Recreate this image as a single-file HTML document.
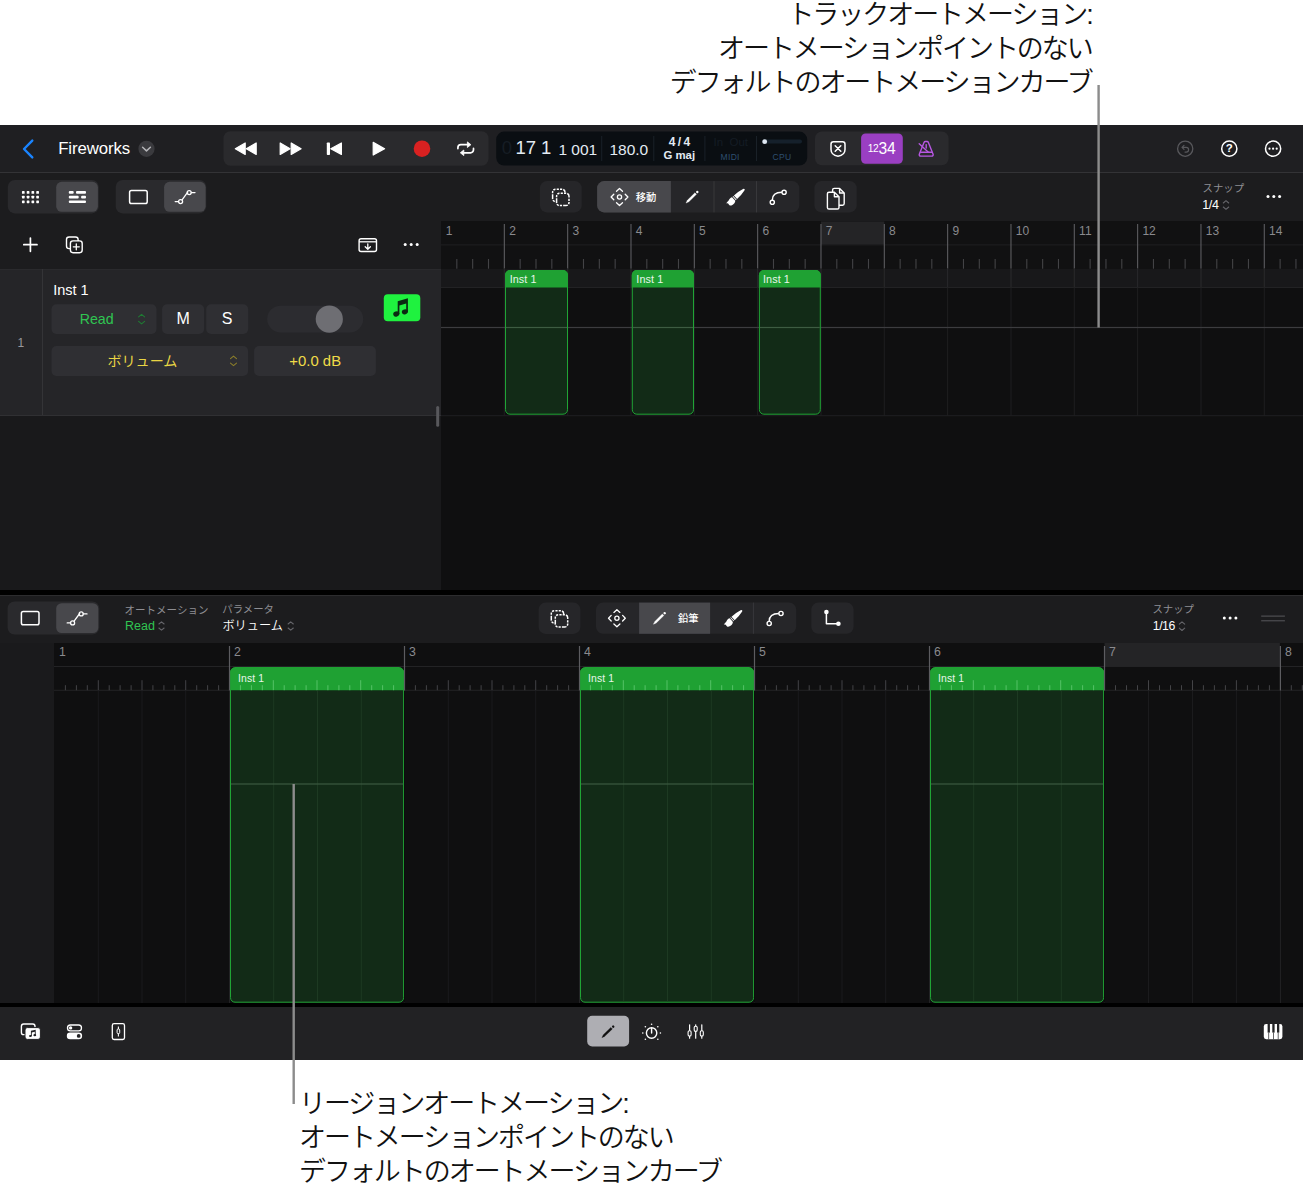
<!DOCTYPE html>
<html lang="ja"><head><meta charset="utf-8"><title>Logic Pro</title><style>
*{box-sizing:border-box;margin:0;padding:0}
html,body{width:1303px;height:1192px;overflow:hidden;background:#fff}
body{position:relative;font-family:"Liberation Sans","Noto Sans CJK JP",sans-serif;color:#fff}
.abs{position:absolute}
.cap{position:absolute;color:#111;font-weight:350;font-size:27px;line-height:34px;white-space:nowrap;letter-spacing:-2.05px}
.box{position:absolute}
.t{position:absolute;white-space:nowrap;line-height:1}
.grp{position:absolute;background:#2a2a2d;border-radius:7px}
.sel{position:absolute;background:#48484c;border-radius:5px}
.btn{position:absolute;background:#2e2e32;border-radius:5px}
svg{position:absolute;left:0;top:0;overflow:visible}
</style></head><body>
<div class="cap" style="right:211.300px;top:-1.800px;text-align:right">トラックオートメーション:<br>オートメーションポイントのない<br>デフォルトのオートメーションカーブ</div>
<div class="cap" style="left:299px;top:1086.800px">リージョンオートメーション:<br>オートメーションポイントのない<br>デフォルトのオートメーションカーブ</div>
<div class="box" style="left:0px;top:125px;width:1303px;height:935px;background:#1c1c1e;"></div>
<div class="box" style="left:0px;top:125px;width:1303px;height:48px;background:#1f1f22;border-bottom:1px solid #333336"></div>
<div class="box" style="left:0px;top:173px;width:1303px;height:48.5px;background:#1c1c1e;border-bottom:1px solid #28282a"></div>
<div class="box" style="left:0px;top:221px;width:441px;height:48px;background:#1c1c1e;"></div>
<div class="box" style="left:441px;top:221px;width:862px;height:48px;background:#111112;"></div>
<div class="box" style="left:0px;top:268.5px;width:441px;height:147px;background:#252528;border-top:1px solid #2a2a2d;border-bottom:1px solid #303033"></div>
<div class="box" style="left:42px;top:269px;width:1px;height:146px;background:#343437;"></div>
<div class="box" style="left:0px;top:416px;width:441px;height:174px;background:#19191b;"></div>
<div class="box" style="left:441px;top:268.5px;width:862px;height:322px;background:#0f0f10;"></div>
<div class="box" style="left:441px;top:268.5px;width:862px;height:19px;background:#18181a;border-bottom:1px solid #222224"></div>
<div class="box" style="left:0px;top:590px;width:1303px;height:4.5px;background:#000;"></div>
<div class="box" style="left:0px;top:594.5px;width:1303px;height:48.5px;background:#1c1c1e;border-top:1px solid #2c2c2e"></div>
<div class="box" style="left:0px;top:643px;width:54px;height:360px;background:#1a1a1c;"></div>
<div class="box" style="left:54px;top:643px;width:1249px;height:360px;background:#0f0f10;"></div>
<div class="box" style="left:0px;top:1003px;width:1303px;height:4px;background:#000;"></div>
<div class="box" style="left:0px;top:1007px;width:1303px;height:52.6px;background:#222224;"></div>
<svg width="1303" height="1192" viewBox="0 0 1303 1192"><polyline points="32.3,140.6 24,149 32.3,157.4" fill="none" stroke="#1a84ff" stroke-width="2.4" stroke-linecap="round" stroke-linejoin="round"/><circle cx="146.5" cy="148.8" r="8.1" fill="#3a3a3e"/><polyline points="142.6,147.3 146.5,150.9 150.4,147.3" fill="none" stroke="#b4b4b8" stroke-width="1.5" stroke-linecap="round" stroke-linejoin="round"/><rect x="223.5" y="131.3" width="265" height="34.4" rx="7" fill="#2a2a2d"/><polygon points="235.3,148.7 245.2,143 245.2,154.4" fill="#fff" stroke="#fff" stroke-width="1.2" stroke-linejoin="round"/><polygon points="246.3,148.7 256.2,143 256.2,154.4" fill="#fff" stroke="#fff" stroke-width="1.2" stroke-linejoin="round"/><polygon points="301.1,148.7 291.2,143 291.2,154.4" fill="#fff" stroke="#fff" stroke-width="1.2" stroke-linejoin="round"/><polygon points="290.1,148.7 280.2,143 280.2,154.4" fill="#fff" stroke="#fff" stroke-width="1.2" stroke-linejoin="round"/><rect x="326.8" y="142.4" width="3.2" height="12.6" rx="0.8" fill="#fff"/><polygon points="330.8,148.7 341.4,143 341.4,154.4" fill="#fff" stroke="#fff" stroke-width="1.2" stroke-linejoin="round"/><polygon points="373.2,142.4 384.6,148.7 373.2,155" fill="#fff" stroke="#fff" stroke-width="1.2" stroke-linejoin="round"/><circle cx="422" cy="148.7" r="8.3" fill="#d92121"/><g fill="none" stroke="#fff" stroke-width="1.700" stroke-linecap="round" stroke-linejoin="round"><path d="M457.900 148.600v-.900a3 3 0 0 1 3-3h6.400"/><path d="M473.500 148.400v1.400a3 3 0 0 1-3 3h-6.400"/></g><g fill="#fff" stroke="#fff" stroke-width=".800" stroke-linejoin="round"><polygon points="467.400,141.900 470.900,144.700 467.400,147.500"/><polygon points="463.800,150 460.300,152.800 463.800,155.600"/></g><rect x="496.2" y="131.6" width="311" height="34" rx="8" fill="#0a0e12"/><rect x="601.2" y="136" width="1" height="25" fill="#1a2128"/><rect x="653.3" y="136" width="1" height="25" fill="#1a2128"/><rect x="704.4" y="136" width="1" height="25" fill="#1a2128"/><rect x="756.0" y="136" width="1" height="25" fill="#1a2128"/><rect x="762" y="139.6" width="40" height="4" rx="2" fill="#15202b"/><circle cx="764.7" cy="141.7" r="2.4" fill="#dfe8f2"/><rect x="815" y="131.4" width="133.6" height="33.9" rx="7" fill="#2a2a2d"/><rect x="861.1" y="133.4" width="41.7" height="30.3" rx="4.5" fill="#9a3fc2"/><path d="M833.4 141.8h9.200a2.400 2.400 0 0 1 2.400 2.400v5.200c0 3.800-2.800 6-7 6.800c-4.200-.800-7-3-7-6.800v-5.200a2.400 2.400 0 0 1 2.400-2.400z" fill="none" stroke="#fff" stroke-width="1.500" stroke-linejoin="round"/><path d="M835.200 145.700l5.600 5.600m0-5.600l-5.600 5.600" stroke="#fff" stroke-width="1.500" stroke-linecap="round"/><g fill="none" stroke="#b757e2" stroke-width="1.400" stroke-linecap="round" stroke-linejoin="round"><path d="M925.300 141.500h1.800a1.400 1.400 0 0 1 1.300 .900l4.700 11.800a1.400 1.400 0 0 1-1.300 1.900h-11.200a1.400 1.400 0 0 1-1.300-1.900l4.700-11.800a1.400 1.400 0 0 1 1.300-.900z"/><path d="M920.400 152.300h11.600"/><path d="M919.200 143.800l9.200 8.400"/><path d="M926.200 144.600v3.400"/></g><circle cx="1185.2" cy="148.7" r="7.6" fill="none" stroke="#58585c" stroke-width="1.3"/><path d="M1182.2 147.3h4a2.400 2.400 0 0 1 0 4.800h-1.200M1184 145.300l-2 2 2 2" fill="none" stroke="#58585c" stroke-width="1.200" stroke-linecap="round" stroke-linejoin="round"/><circle cx="1229.3" cy="148.7" r="7.6" fill="none" stroke="#fff" stroke-width="1.5"/><circle cx="1273.1" cy="148.7" r="7.6" fill="none" stroke="#fff" stroke-width="1.5"/><circle cx="1269.5" cy="148.7" r="1.100" fill="#fff"/><circle cx="1273.1" cy="148.7" r="1.100" fill="#fff"/><circle cx="1276.6999999999998" cy="148.7" r="1.100" fill="#fff"/><rect x="7.8" y="180" width="91" height="33.400" rx="7" fill="#2a2a2d"/><rect x="56.2" y="181.800" width="41.700" height="30" rx="5.500" fill="#48484c"/><rect x="115.7" y="180" width="90.600" height="33.400" rx="7" fill="#2a2a2d"/><rect x="164.1" y="181.800" width="41.500" height="30" rx="5.500" fill="#48484c"/><rect x="21.95" y="191.05" width="2.700" height="2.700" rx=".600" fill="#fff"/><rect x="26.72" y="191.05" width="2.700" height="2.700" rx=".600" fill="#fff"/><rect x="31.49" y="191.05" width="2.700" height="2.700" rx=".600" fill="#fff"/><rect x="36.26" y="191.05" width="2.700" height="2.700" rx=".600" fill="#fff"/><rect x="21.95" y="195.75" width="2.700" height="2.700" rx=".600" fill="#fff"/><rect x="26.72" y="195.75" width="2.700" height="2.700" rx=".600" fill="#fff"/><rect x="31.49" y="195.75" width="2.700" height="2.700" rx=".600" fill="#fff"/><rect x="36.26" y="195.75" width="2.700" height="2.700" rx=".600" fill="#fff"/><rect x="21.95" y="200.45" width="2.700" height="2.700" rx=".600" fill="#fff"/><rect x="26.72" y="200.45" width="2.700" height="2.700" rx=".600" fill="#fff"/><rect x="31.49" y="200.45" width="2.700" height="2.700" rx=".600" fill="#fff"/><rect x="36.26" y="200.45" width="2.700" height="2.700" rx=".600" fill="#fff"/><rect x="68.8" y="191.10" width="4.9" height="2.600" rx="1" fill="#fff"/><rect x="76" y="191.10" width="10" height="2.600" rx="1" fill="#fff"/><rect x="68.8" y="195.80" width="9.9" height="2.600" rx="1" fill="#fff"/><rect x="81.1" y="195.80" width="4.9" height="2.600" rx="1" fill="#fff"/><rect x="68.8" y="200.50" width="17.2" height="2.600" rx="1" fill="#fff"/><rect x="129.6" y="190.400" width="17.600" height="13.200" rx="1.800" fill="none" stroke="#fff" stroke-width="1.500"/><g fill="none" stroke="#fff" stroke-width="1.300" stroke-linecap="round"><path d="M175.2 201.6h3M182.1 199.79999999999998l5.600-7.600M191.39999999999998 192.6h3.600"/><circle cx="180.6" cy="201.6" r="2"/><circle cx="189.2" cy="192.6" r="2"/></g><rect x="539.9" y="181.1" width="41.800" height="31.300" rx="7" fill="#262629"/><rect x="552.6" y="189.2" width="12.400" height="12.400" rx="3" fill="none" stroke="#fff" stroke-width="1.500" stroke-dasharray="2.200 1.100 2.200 1.100 4.710 1.100" stroke-dashoffset="11.310"/><rect x="555.8000000000001" y="192.39999999999998" width="14" height="14" rx="3.600" fill="#262629"/><rect x="556.6" y="193.2" width="12.400" height="12.400" rx="3" fill="none" stroke="#fff" stroke-width="1.500" stroke-dasharray="2.200 1.100 2.200 1.100 4.710 1.100" stroke-dashoffset="11.310"/><rect x="597.1" y="181.100" width="202.200" height="31.300" rx="7" fill="#262629"/><path d="M604.1 181.100h66.800v31.300h-66.800a7 7 0 0 1-7-7v-17.300a7 7 0 0 1 7-7z" fill="#48484c"/><rect x="713.5" y="181.100" width="1" height="31.300" fill="#38383b"/><rect x="756" y="181.100" width="1" height="31.300" fill="#38383b"/><g fill="none" stroke="#fff" stroke-width="1.300" stroke-linecap="round" stroke-linejoin="round"><circle cx="619.5" cy="197" r="2.100"/><polyline points="616.5,191.2 619.5,188.5 622.5,191.2"/><polyline points="616.5,202.8 619.5,205.5 622.5,202.8"/><polyline points="613.8,194.2 611.1,197 613.8,199.8"/><polyline points="625.2,194.2 627.9,197 625.2,199.8"/></g><g transform="translate(686.0 203.1) rotate(-44.500)" fill="#fff"><path d="M0 0L3-1.050L13.600-1.100L13.600 1.100L3 1.050Z" stroke="#fff" stroke-width="0.300" stroke-linejoin="round"/><rect x="14.700" y="-1.250" width="2.300" height="2.500" rx="1.100"/></g><g transform="translate(729.0 203) rotate(-42)" fill="#fff"><path d="M8.700-2.300Q14-2.500 19.800-1A1 1 0 0 1 19.800 1Q14 2.600 8.700 2.400Z"/><rect x="7" y="-2.400" width=".900" height="4.900"/><path d="M6.200-2.300L6.200 2.500C5.200 3.600 3 4.200 .800 3.600C-1 3.100-1.600 1.600-1 .400C-.700-.300-1.200-1-2.400-1.500C-.800-2.300 .800-1.600 2.200-2.400C3.500-3.100 5-2.900 6.200-2.300Z"/></g><g fill="none" stroke="#fff" stroke-width="1.400"><path d="M772.3 200.10000000000002c0-5.100 3.700-7.800 9.600-7.800"/><circle cx="772.3" cy="202.3" r="2.100"/><circle cx="784.1" cy="192.3" r="2.100"/></g><rect x="814.4" y="181.100" width="42.300" height="31.300" rx="7" fill="#262629"/><g fill="#262629" stroke="#fff" stroke-width="1.400" stroke-linejoin="round"><path d="M834.200 188.400h5.400l4.600 4.600v10.600a1.600 1.600 0 0 1-1.600 1.600h-8.400a1.600 1.600 0 0 1-1.600-1.600v-13.600a1.600 1.600 0 0 1 1.600-1.600z"/><path d="M839.600 188.600v4.400h4.400" fill="none"/><path d="M829 192.200h5.400l4.600 4.600v10.600a1.600 1.600 0 0 1-1.600 1.600h-8.400a1.600 1.600 0 0 1-1.600-1.600v-13.600a1.600 1.600 0 0 1 1.600-1.600z"/><path d="M834.400 192.400v4.400h4.400" fill="none"/></g><g fill="none" stroke="#66666b" stroke-width="1.100" stroke-linecap="round" stroke-linejoin="round"><polyline points="1223.3,203 1226,200.7 1228.7,203"/><polyline points="1223.3,207 1226,209.3 1228.7,207"/></g><circle cx="1268.0" cy="196.600" r="1.500" fill="#fff"/><circle cx="1273.8" cy="196.600" r="1.500" fill="#fff"/><circle cx="1279.6" cy="196.600" r="1.500" fill="#fff"/></svg>
<div class="t" style="left:58.2px;top:140.68px;font-size:16.8px;color:#fff;font-weight:400;letter-spacing:-0.1px">Fireworks</div>
<div class="t" style="left:501.8px;top:139.34px;font-size:18.5px;color:#161d24;font-weight:400;">0</div>
<div class="t" style="left:515.4px;top:139.34px;font-size:18.5px;color:#e3ebf3;font-weight:400;">17 1</div>
<div class="t" style="left:558.4px;top:141.88px;font-size:15.5px;color:#e3ebf3;font-weight:400;">1 001</div>
<div class="t" style="left:609.4px;top:141.88px;font-size:15.5px;color:#e3ebf3;font-weight:400;">180.0</div>
<div class="t" style="left:479.29999999999995px;width:400px;text-align:center;top:136.2px;font-size:12px;color:#e3ebf3;font-weight:700;letter-spacing:-0.5px">4 / 4</div>
<div class="t" style="left:479.29999999999995px;width:400px;text-align:center;top:150.4px;font-size:11.4px;color:#e3ebf3;font-weight:700;">G maj</div>
<div class="t" style="left:530.8px;width:400px;text-align:center;top:137.2px;font-size:11.5px;color:#141c24;font-weight:400;">In &nbsp;Out</div>
<div class="t" style="left:530.2px;width:400px;text-align:center;top:152.8px;font-size:8.5px;color:#2e4f70;font-weight:400;letter-spacing:0.3px">MIDI</div>
<div class="t" style="left:582px;width:400px;text-align:center;top:152.8px;font-size:8.5px;color:#2e4f70;font-weight:400;letter-spacing:0.3px">CPU</div>
<div class="t" style="left:867.8px;top:144.37px;font-size:10.2px;color:#fff;font-weight:400;letter-spacing:-0.5px">12</div>
<div class="t" style="left:878.6px;top:140.99px;font-size:15.6px;color:#fff;font-weight:400;letter-spacing:-0.2px">34</div>
<div class="t" style="left:1029.3px;width:400px;text-align:center;top:143.3px;font-size:11.5px;color:#fff;font-weight:700;">?</div>
<div class="t" style="left:635.8px;top:192.7px;font-size:10.3px;color:#fff;font-weight:500;">移動</div>
<div class="t" style="left:1202.6px;top:184.4px;font-size:10.4px;color:#8e8e93;font-weight:400;">スナップ</div>
<div class="t" style="left:1202.2px;top:199.4px;font-size:12.5px;color:#fff;font-weight:400;letter-spacing:-0.3px">1/4</div>
<svg width="1303" height="1192" viewBox="0 0 1303 1192"><path d="M23.800 244.700h13.200M30.400 238.100v13.200" stroke="#fff" stroke-width="1.700" stroke-linecap="round"/><rect x="66.500" y="237" width="11.600" height="11.600" rx="2.600" fill="none" stroke="#fff" stroke-width="1.400"/><rect x="70.400" y="240.900" width="11.800" height="11.800" rx="2.600" fill="#1c1c1e" stroke="#fff" stroke-width="1.400"/><path d="M73.300 246.800h6M76.300 243.800v6" stroke="#fff" stroke-width="1.300" stroke-linecap="round"/><rect x="359.100" y="238.700" width="17.400" height="12.800" rx="2" fill="none" stroke="#fff" stroke-width="1.400"/><path d="M359.100 241.800h17.400" stroke="#fff" stroke-width="1.300"/><path d="M367.800 243.800v5.200M365.200 246.700l2.600 2.500 2.600-2.500" fill="none" stroke="#fff" stroke-width="1.300" stroke-linecap="round" stroke-linejoin="round"/><circle cx="405.2" cy="244.600" r="1.500" fill="#fff"/><circle cx="411.2" cy="244.600" r="1.500" fill="#fff"/><circle cx="417.2" cy="244.600" r="1.500" fill="#fff"/><rect x="821.0" y="221.500" width="63.3" height="23" fill="#242426"/><rect x="441" y="244.400" width="862" height="1" fill="#202022"/><rect x="456.28" y="259" width="1.100" height="9.700" fill="#434346"/><rect x="472.12" y="259" width="1.100" height="9.700" fill="#434346"/><rect x="487.95" y="259" width="1.100" height="9.700" fill="#434346"/><rect x="503.78" y="224" width="1.100" height="44.800" fill="#5c5c60"/><rect x="519.61" y="259" width="1.100" height="9.700" fill="#434346"/><rect x="535.45" y="259" width="1.100" height="9.700" fill="#434346"/><rect x="551.28" y="259" width="1.100" height="9.700" fill="#434346"/><rect x="567.11" y="224" width="1.100" height="44.800" fill="#5c5c60"/><rect x="582.94" y="259" width="1.100" height="9.700" fill="#434346"/><rect x="598.77" y="259" width="1.100" height="9.700" fill="#434346"/><rect x="614.61" y="259" width="1.100" height="9.700" fill="#434346"/><rect x="630.44" y="224" width="1.100" height="44.800" fill="#5c5c60"/><rect x="646.27" y="259" width="1.100" height="9.700" fill="#434346"/><rect x="662.11" y="259" width="1.100" height="9.700" fill="#434346"/><rect x="677.94" y="259" width="1.100" height="9.700" fill="#434346"/><rect x="693.77" y="224" width="1.100" height="44.800" fill="#5c5c60"/><rect x="709.60" y="259" width="1.100" height="9.700" fill="#434346"/><rect x="725.43" y="259" width="1.100" height="9.700" fill="#434346"/><rect x="741.27" y="259" width="1.100" height="9.700" fill="#434346"/><rect x="757.10" y="224" width="1.100" height="44.800" fill="#5c5c60"/><rect x="772.93" y="259" width="1.100" height="9.700" fill="#434346"/><rect x="788.76" y="259" width="1.100" height="9.700" fill="#434346"/><rect x="804.60" y="259" width="1.100" height="9.700" fill="#434346"/><rect x="820.43" y="224" width="1.100" height="44.800" fill="#5c5c60"/><rect x="836.26" y="259" width="1.100" height="9.700" fill="#434346"/><rect x="852.10" y="259" width="1.100" height="9.700" fill="#434346"/><rect x="867.93" y="259" width="1.100" height="9.700" fill="#434346"/><rect x="883.76" y="224" width="1.100" height="44.800" fill="#5c5c60"/><rect x="899.59" y="259" width="1.100" height="9.700" fill="#434346"/><rect x="915.42" y="259" width="1.100" height="9.700" fill="#434346"/><rect x="931.26" y="259" width="1.100" height="9.700" fill="#434346"/><rect x="947.09" y="224" width="1.100" height="44.800" fill="#5c5c60"/><rect x="962.92" y="259" width="1.100" height="9.700" fill="#434346"/><rect x="978.75" y="259" width="1.100" height="9.700" fill="#434346"/><rect x="994.59" y="259" width="1.100" height="9.700" fill="#434346"/><rect x="1010.42" y="224" width="1.100" height="44.800" fill="#5c5c60"/><rect x="1026.25" y="259" width="1.100" height="9.700" fill="#434346"/><rect x="1042.09" y="259" width="1.100" height="9.700" fill="#434346"/><rect x="1057.92" y="259" width="1.100" height="9.700" fill="#434346"/><rect x="1073.75" y="224" width="1.100" height="44.800" fill="#5c5c60"/><rect x="1089.58" y="259" width="1.100" height="9.700" fill="#434346"/><rect x="1105.41" y="259" width="1.100" height="9.700" fill="#434346"/><rect x="1121.25" y="259" width="1.100" height="9.700" fill="#434346"/><rect x="1137.08" y="224" width="1.100" height="44.800" fill="#5c5c60"/><rect x="1152.91" y="259" width="1.100" height="9.700" fill="#434346"/><rect x="1168.75" y="259" width="1.100" height="9.700" fill="#434346"/><rect x="1184.58" y="259" width="1.100" height="9.700" fill="#434346"/><rect x="1200.41" y="224" width="1.100" height="44.800" fill="#5c5c60"/><rect x="1216.24" y="259" width="1.100" height="9.700" fill="#434346"/><rect x="1232.08" y="259" width="1.100" height="9.700" fill="#434346"/><rect x="1247.91" y="259" width="1.100" height="9.700" fill="#434346"/><rect x="1263.74" y="224" width="1.100" height="44.800" fill="#5c5c60"/><rect x="1279.57" y="259" width="1.100" height="9.700" fill="#434346"/><rect x="1295.40" y="259" width="1.100" height="9.700" fill="#434346"/><rect x="503.8" y="268.500" width="1" height="147" fill="#1e1e20"/><rect x="503.8" y="268.500" width="1" height="19" fill="#29292b"/><rect x="567.2" y="268.500" width="1" height="147" fill="#1e1e20"/><rect x="567.2" y="268.500" width="1" height="19" fill="#29292b"/><rect x="630.5" y="268.500" width="1" height="147" fill="#1e1e20"/><rect x="630.5" y="268.500" width="1" height="19" fill="#29292b"/><rect x="693.8" y="268.500" width="1" height="147" fill="#1e1e20"/><rect x="693.8" y="268.500" width="1" height="19" fill="#29292b"/><rect x="757.1" y="268.500" width="1" height="147" fill="#1e1e20"/><rect x="757.1" y="268.500" width="1" height="19" fill="#29292b"/><rect x="820.5" y="268.500" width="1" height="147" fill="#1e1e20"/><rect x="820.5" y="268.500" width="1" height="19" fill="#29292b"/><rect x="883.8" y="268.500" width="1" height="147" fill="#1e1e20"/><rect x="883.8" y="268.500" width="1" height="19" fill="#29292b"/><rect x="947.1" y="268.500" width="1" height="147" fill="#1e1e20"/><rect x="947.1" y="268.500" width="1" height="19" fill="#29292b"/><rect x="1010.5" y="268.500" width="1" height="147" fill="#1e1e20"/><rect x="1010.5" y="268.500" width="1" height="19" fill="#29292b"/><rect x="1073.8" y="268.500" width="1" height="147" fill="#1e1e20"/><rect x="1073.8" y="268.500" width="1" height="19" fill="#29292b"/><rect x="1137.1" y="268.500" width="1" height="147" fill="#1e1e20"/><rect x="1137.1" y="268.500" width="1" height="19" fill="#29292b"/><rect x="1200.5" y="268.500" width="1" height="147" fill="#1e1e20"/><rect x="1200.5" y="268.500" width="1" height="19" fill="#29292b"/><rect x="1263.8" y="268.500" width="1" height="147" fill="#1e1e20"/><rect x="1263.8" y="268.500" width="1" height="19" fill="#29292b"/><rect x="441" y="415.200" width="862" height="1" fill="#202022"/><rect x="441" y="326.900" width="862" height="1.200" fill="#3c3c3f"/><rect x="505.5" y="270.5" width="62.0" height="143.7" rx="4.500" fill="#122b17" stroke="#20a435" stroke-width="1"/><path d="M505.0 287.5v-12.5a5 5 0 0 1 5-5h53.0a5 5 0 0 1 5 5v12.5z" fill="#1fa133"/><rect x="506.0" y="326.900" width="61.0" height="1.200" fill="#3d5c42"/><rect x="632.3" y="270.5" width="61.2" height="143.7" rx="4.500" fill="#122b17" stroke="#20a435" stroke-width="1"/><path d="M631.8 287.5v-12.5a5 5 0 0 1 5-5h52.2a5 5 0 0 1 5 5v12.5z" fill="#1fa133"/><rect x="632.8" y="326.900" width="60.2" height="1.200" fill="#3d5c42"/><rect x="759.4" y="270.5" width="60.9" height="143.7" rx="4.500" fill="#122b17" stroke="#20a435" stroke-width="1"/><path d="M758.9 287.5v-12.5a5 5 0 0 1 5-5h51.9a5 5 0 0 1 5 5v12.5z" fill="#1fa133"/><rect x="759.9" y="326.900" width="59.9" height="1.200" fill="#3d5c42"/><rect x="51.500" y="304.200" width="105" height="29.800" rx="5" fill="#2f2f33"/><rect x="162.100" y="304.200" width="42" height="29.800" rx="5" fill="#2f2f33"/><rect x="206.200" y="304.200" width="42" height="29.800" rx="5" fill="#2f2f33"/><rect x="267.200" y="305.700" width="96" height="26.800" rx="13.400" fill="#2c2c30"/><circle cx="329.300" cy="319.100" r="13.600" fill="#6e6e73"/><rect x="51.500" y="346" width="196.600" height="29.900" rx="5" fill="#2f2f33"/><rect x="254.100" y="346" width="121.800" height="29.900" rx="5" fill="#2f2f33"/><g fill="none" stroke="#1f7a33" stroke-width="1.100" stroke-linecap="round" stroke-linejoin="round"><polyline points="138.6,316.8 141.6,314.3 144.6,316.8"/><polyline points="138.6,321.40000000000003 141.6,323.90000000000003 144.6,321.40000000000003"/></g><g fill="none" stroke="#8a7d2a" stroke-width="1.100" stroke-linecap="round" stroke-linejoin="round"><polyline points="230.5,358.59999999999997 233.5,356.09999999999997 236.5,358.59999999999997"/><polyline points="230.5,363.2 233.5,365.7 236.5,363.2"/></g><rect x="383.800" y="294.200" width="36.500" height="27" rx="4" fill="#1ff23f"/><g fill="#0b2a12"><ellipse cx="396.300" cy="314" rx="3.100" ry="2.500" transform="rotate(-18 396.300 314)"/><ellipse cx="404.900" cy="311.800" rx="3.100" ry="2.500" transform="rotate(-18 404.900 311.800)"/><path d="M397.700 301.200l10.200-3v13.600h-1.700v-8.200l-6.800 2v8.400h-1.700z"/></g><rect x="436.200" y="406" width="3" height="20.800" rx="1.500" fill="#58585c"/></svg>
<div class="t" style="left:445.8px;top:224.74px;font-size:12px;color:#8a8a8e;font-weight:400;">1</div>
<div class="t" style="left:509.13px;top:224.74px;font-size:12px;color:#8a8a8e;font-weight:400;">2</div>
<div class="t" style="left:572.4599999999999px;top:224.74px;font-size:12px;color:#8a8a8e;font-weight:400;">3</div>
<div class="t" style="left:635.79px;top:224.74px;font-size:12px;color:#8a8a8e;font-weight:400;">4</div>
<div class="t" style="left:699.1199999999999px;top:224.74px;font-size:12px;color:#8a8a8e;font-weight:400;">5</div>
<div class="t" style="left:762.4499999999999px;top:224.74px;font-size:12px;color:#8a8a8e;font-weight:400;">6</div>
<div class="t" style="left:825.78px;top:224.74px;font-size:12px;color:#8a8a8e;font-weight:400;">7</div>
<div class="t" style="left:889.1099999999999px;top:224.74px;font-size:12px;color:#8a8a8e;font-weight:400;">8</div>
<div class="t" style="left:952.4399999999999px;top:224.74px;font-size:12px;color:#8a8a8e;font-weight:400;">9</div>
<div class="t" style="left:1015.77px;top:224.74px;font-size:12px;color:#8a8a8e;font-weight:400;">10</div>
<div class="t" style="left:1079.1px;top:224.74px;font-size:12px;color:#8a8a8e;font-weight:400;">11</div>
<div class="t" style="left:1142.43px;top:224.74px;font-size:12px;color:#8a8a8e;font-weight:400;">12</div>
<div class="t" style="left:1205.76px;top:224.74px;font-size:12px;color:#8a8a8e;font-weight:400;">13</div>
<div class="t" style="left:1269.09px;top:224.74px;font-size:12px;color:#8a8a8e;font-weight:400;">14</div>
<div class="t" style="left:509.63px;top:274.06px;font-size:10.8px;color:#e8f5ea;font-weight:400;letter-spacing:0.1px">Inst 1</div>
<div class="t" style="left:636.29px;top:274.06px;font-size:10.8px;color:#e8f5ea;font-weight:400;letter-spacing:0.1px">Inst 1</div>
<div class="t" style="left:762.9499999999999px;top:274.06px;font-size:10.8px;color:#e8f5ea;font-weight:400;letter-spacing:0.1px">Inst 1</div>
<div class="t" style="left:53.2px;top:283.13px;font-size:14.5px;color:#fff;font-weight:400;">Inst 1</div>
<div class="t" style="left:17.6px;top:337.04px;font-size:12px;color:#98989d;font-weight:400;">1</div>
<div class="t" style="left:-103.3px;width:400px;text-align:center;top:312.38px;font-size:14.2px;color:#30c552;font-weight:400;">Read</div>
<div class="t" style="left:-16.900000000000006px;width:400px;text-align:center;top:311.06px;font-size:16px;color:#fff;font-weight:400;">M</div>
<div class="t" style="left:27.19999999999999px;width:400px;text-align:center;top:311.06px;font-size:16px;color:#fff;font-weight:400;">S</div>
<div class="t" style="left:-57.599999999999994px;width:400px;text-align:center;top:354.26px;font-size:14.1px;color:#e8d544;font-weight:400;">ボリューム</div>
<div class="t" style="left:115.19999999999999px;width:400px;text-align:center;top:353.69px;font-size:14.9px;color:#f0dc48;font-weight:400;">+0.0 dB</div>
<svg width="1303" height="1192" viewBox="0 0 1303 1192"><rect x="7.600" y="601.500" width="91.700" height="33" rx="7" fill="#2a2a2d"/><rect x="56.200" y="603.200" width="42.100" height="29.800" rx="5.500" fill="#48484c"/><rect x="21.400" y="611.500" width="17.600" height="13.200" rx="1.800" fill="none" stroke="#fff" stroke-width="1.500"/><g fill="none" stroke="#fff" stroke-width="1.300" stroke-linecap="round"><path d="M67.2 622.9h3M74.10000000000001 621.1l5.600-7.600M83.4 613.9h3.600"/><circle cx="72.60000000000001" cy="622.9" r="2"/><circle cx="81.2" cy="613.9" r="2"/></g><g fill="none" stroke="#66666b" stroke-width="1.100" stroke-linecap="round" stroke-linejoin="round"><polyline points="158.9,624 161.5,621.8 164.1,624"/><polyline points="158.9,628 161.5,630.2 164.1,628"/></g><g fill="none" stroke="#66666b" stroke-width="1.100" stroke-linecap="round" stroke-linejoin="round"><polyline points="288.09999999999997,624 290.7,621.8 293.3,624"/><polyline points="288.09999999999997,628 290.7,630.2 293.3,628"/></g><rect x="538.6" y="602.6" width="41.800" height="31.300" rx="7" fill="#262629"/><rect x="551.3000000000001" y="610.7" width="12.400" height="12.400" rx="3" fill="none" stroke="#fff" stroke-width="1.500" stroke-dasharray="2.200 1.100 2.200 1.100 4.710 1.100" stroke-dashoffset="11.310"/><rect x="554.5000000000001" y="613.9000000000001" width="14" height="14" rx="3.600" fill="#262629"/><rect x="555.3000000000001" y="614.7" width="12.400" height="12.400" rx="3" fill="none" stroke="#fff" stroke-width="1.500" stroke-dasharray="2.200 1.100 2.200 1.100 4.710 1.100" stroke-dashoffset="11.310"/><rect x="596" y="602.600" width="200.200" height="31.200" rx="7" fill="#262629"/><rect x="639.100" y="602.600" width="71" height="31.200" fill="#48484c"/><rect x="752.900" y="602.600" width="1" height="31.200" fill="#38383b"/><g fill="none" stroke="#fff" stroke-width="1.300" stroke-linecap="round" stroke-linejoin="round"><circle cx="616.9" cy="618.2" r="2.100"/><polyline points="613.9,612.4000000000001 616.9,609.7 619.9,612.4000000000001"/><polyline points="613.9,624.0 616.9,626.7 619.9,624.0"/><polyline points="611.1999999999999,615.4000000000001 608.5,618.2 611.1999999999999,621.0"/><polyline points="622.6,615.4000000000001 625.3,618.2 622.6,621.0"/></g><g transform="translate(653.4000000000001 624.3000000000001) rotate(-44.500)" fill="#fff"><path d="M0 0L3-1.050L13.600-1.100L13.600 1.100L3 1.050Z" stroke="#fff" stroke-width="0.300" stroke-linejoin="round"/><rect x="14.700" y="-1.250" width="2.300" height="2.500" rx="1.100"/></g><g transform="translate(726.6 624.2) rotate(-42)" fill="#fff"><path d="M8.700-2.300Q14-2.500 19.800-1A1 1 0 0 1 19.800 1Q14 2.600 8.700 2.400Z"/><rect x="7" y="-2.400" width=".900" height="4.900"/><path d="M6.200-2.300L6.200 2.500C5.200 3.600 3 4.200 .800 3.600C-1 3.100-1.600 1.600-1 .400C-.700-.300-1.200-1-2.400-1.500C-.800-2.300 .800-1.600 2.200-2.400C3.500-3.100 5-2.900 6.200-2.300Z"/></g><g fill="none" stroke="#fff" stroke-width="1.400"><path d="M769.1999999999999 621.3c0-5.100 3.700-7.800 9.600-7.800"/><circle cx="769.1999999999999" cy="623.5" r="2.100"/><circle cx="781.0" cy="613.5" r="2.100"/></g><rect x="811.300" y="602.600" width="42.300" height="31.200" rx="7" fill="#262629"/><path d="M826.400 612.200v11.600h11.600" fill="none" stroke="#fff" stroke-width="1.500" stroke-linejoin="round"/><circle cx="826.400" cy="612" r="2.300" fill="#fff"/><circle cx="838.400" cy="623.800" r="2.300" fill="#fff"/><g fill="none" stroke="#66666b" stroke-width="1.100" stroke-linecap="round" stroke-linejoin="round"><polyline points="1179.3,624.2 1182,621.9000000000001 1184.7,624.2"/><polyline points="1179.3,628.2 1182,630.5 1184.7,628.2"/></g><circle cx="1224.3" cy="618.100" r="1.500" fill="#fff"/><circle cx="1230.1" cy="618.100" r="1.500" fill="#fff"/><circle cx="1235.8999999999999" cy="618.100" r="1.500" fill="#fff"/><rect x="1261.200" y="615.600" width="23.700" height="1" fill="#58585c"/><rect x="1261.200" y="620.300" width="23.700" height="1" fill="#58585c"/><rect x="1104.5" y="643" width="175.4" height="23.400" fill="#242426"/><rect x="54" y="666" width="1249" height="1" fill="#232325"/><rect x="54" y="689.800" width="1249" height="1" fill="#232325"/><rect x="97.8" y="690" width="1" height="313" fill="#1b1b1d"/><rect x="141.5" y="690" width="1" height="313" fill="#1b1b1d"/><rect x="185.2" y="690" width="1" height="313" fill="#1b1b1d"/><rect x="229.0" y="690" width="1" height="313" fill="#232325"/><rect x="272.8" y="690" width="1" height="313" fill="#1b1b1d"/><rect x="316.5" y="690" width="1" height="313" fill="#1b1b1d"/><rect x="360.2" y="690" width="1" height="313" fill="#1b1b1d"/><rect x="404.0" y="690" width="1" height="313" fill="#232325"/><rect x="447.8" y="690" width="1" height="313" fill="#1b1b1d"/><rect x="491.5" y="690" width="1" height="313" fill="#1b1b1d"/><rect x="535.2" y="690" width="1" height="313" fill="#1b1b1d"/><rect x="579.0" y="690" width="1" height="313" fill="#232325"/><rect x="622.8" y="690" width="1" height="313" fill="#1b1b1d"/><rect x="666.5" y="690" width="1" height="313" fill="#1b1b1d"/><rect x="710.2" y="690" width="1" height="313" fill="#1b1b1d"/><rect x="754.0" y="690" width="1" height="313" fill="#232325"/><rect x="797.8" y="690" width="1" height="313" fill="#1b1b1d"/><rect x="841.5" y="690" width="1" height="313" fill="#1b1b1d"/><rect x="885.2" y="690" width="1" height="313" fill="#1b1b1d"/><rect x="929.0" y="690" width="1" height="313" fill="#232325"/><rect x="972.8" y="690" width="1" height="313" fill="#1b1b1d"/><rect x="1016.5" y="690" width="1" height="313" fill="#1b1b1d"/><rect x="1060.2" y="690" width="1" height="313" fill="#1b1b1d"/><rect x="1104.0" y="690" width="1" height="313" fill="#232325"/><rect x="1148.0" y="690" width="1" height="313" fill="#1b1b1d"/><rect x="1192.0" y="690" width="1" height="313" fill="#1b1b1d"/><rect x="1235.9" y="690" width="1" height="313" fill="#1b1b1d"/><rect x="1279.9" y="690" width="1" height="313" fill="#232325"/><rect x="230.5" y="668" width="173.1" height="334.200" rx="4.500" fill="#122b17" stroke="#20a435" stroke-width="1"/><path d="M230.0 690.200v-17.600a5.500 5.500 0 0 1 5.500-5.500h163.1a5.500 5.500 0 0 1 5.500 5.500v17.600z" fill="#1fa133"/><rect x="273.2" y="690.200" width="1" height="311" fill="#1d3a22"/><rect x="317.0" y="690.200" width="1" height="311" fill="#1d3a22"/><rect x="360.8" y="690.200" width="1" height="311" fill="#1d3a22"/><rect x="231.0" y="783.400" width="172.1" height="1.200" fill="#3a5840"/><rect x="404.1" y="690.500" width="0.800" height="312" fill="#060606"/><rect x="580.5" y="668" width="173.1" height="334.200" rx="4.500" fill="#122b17" stroke="#20a435" stroke-width="1"/><path d="M580.0 690.200v-17.600a5.500 5.500 0 0 1 5.500-5.500h163.1a5.500 5.500 0 0 1 5.500 5.500v17.600z" fill="#1fa133"/><rect x="623.2" y="690.200" width="1" height="311" fill="#1d3a22"/><rect x="667.0" y="690.200" width="1" height="311" fill="#1d3a22"/><rect x="710.8" y="690.200" width="1" height="311" fill="#1d3a22"/><rect x="581.0" y="783.400" width="172.1" height="1.200" fill="#3a5840"/><rect x="754.1" y="690.500" width="0.800" height="312" fill="#060606"/><rect x="930.5" y="668" width="173.1" height="334.200" rx="4.500" fill="#122b17" stroke="#20a435" stroke-width="1"/><path d="M930.0 690.200v-17.600a5.500 5.500 0 0 1 5.500-5.500h163.1a5.500 5.500 0 0 1 5.500 5.500v17.600z" fill="#1fa133"/><rect x="973.2" y="690.200" width="1" height="311" fill="#1d3a22"/><rect x="1017.0" y="690.200" width="1" height="311" fill="#1d3a22"/><rect x="1060.8" y="690.200" width="1" height="311" fill="#1d3a22"/><rect x="931.0" y="783.400" width="172.1" height="1.200" fill="#3a5840"/><rect x="1104.1" y="690.500" width="0.800" height="312" fill="#060606"/><rect x="64.9" y="685.200" width="1" height="5" fill="#434346"/><rect x="75.9" y="685.200" width="1" height="5" fill="#434346"/><rect x="86.8" y="685.200" width="1" height="5" fill="#434346"/><rect x="97.8" y="680.200" width="1" height="10" fill="#434346"/><rect x="108.7" y="685.200" width="1" height="5" fill="#434346"/><rect x="119.6" y="685.200" width="1" height="5" fill="#434346"/><rect x="130.6" y="685.200" width="1" height="5" fill="#434346"/><rect x="141.5" y="680.200" width="1" height="10" fill="#434346"/><rect x="152.4" y="685.200" width="1" height="5" fill="#434346"/><rect x="163.4" y="685.200" width="1" height="5" fill="#434346"/><rect x="174.3" y="685.200" width="1" height="5" fill="#434346"/><rect x="185.2" y="680.200" width="1" height="10" fill="#434346"/><rect x="196.2" y="685.200" width="1" height="5" fill="#434346"/><rect x="207.1" y="685.200" width="1" height="5" fill="#434346"/><rect x="218.1" y="685.200" width="1" height="5" fill="#434346"/><rect x="228.9" y="646" width="1.200" height="44.500" fill="#5c5c60"/><rect x="239.9" y="685.200" width="1" height="5" fill="#55c267"/><rect x="250.9" y="685.200" width="1" height="5" fill="#55c267"/><rect x="261.8" y="685.200" width="1" height="5" fill="#55c267"/><rect x="272.8" y="680.200" width="1" height="10" fill="#55c267"/><rect x="283.7" y="685.200" width="1" height="5" fill="#55c267"/><rect x="294.6" y="685.200" width="1" height="5" fill="#55c267"/><rect x="305.6" y="685.200" width="1" height="5" fill="#55c267"/><rect x="316.5" y="680.200" width="1" height="10" fill="#55c267"/><rect x="327.4" y="685.200" width="1" height="5" fill="#55c267"/><rect x="338.4" y="685.200" width="1" height="5" fill="#55c267"/><rect x="349.3" y="685.200" width="1" height="5" fill="#55c267"/><rect x="360.2" y="680.200" width="1" height="10" fill="#55c267"/><rect x="371.2" y="685.200" width="1" height="5" fill="#55c267"/><rect x="382.1" y="685.200" width="1" height="5" fill="#55c267"/><rect x="393.1" y="685.200" width="1" height="5" fill="#55c267"/><rect x="403.9" y="646" width="1.200" height="44.500" fill="#5c5c60"/><rect x="414.9" y="685.200" width="1" height="5" fill="#434346"/><rect x="425.9" y="685.200" width="1" height="5" fill="#434346"/><rect x="436.8" y="685.200" width="1" height="5" fill="#434346"/><rect x="447.8" y="680.200" width="1" height="10" fill="#434346"/><rect x="458.7" y="685.200" width="1" height="5" fill="#434346"/><rect x="469.6" y="685.200" width="1" height="5" fill="#434346"/><rect x="480.6" y="685.200" width="1" height="5" fill="#434346"/><rect x="491.5" y="680.200" width="1" height="10" fill="#434346"/><rect x="502.4" y="685.200" width="1" height="5" fill="#434346"/><rect x="513.4" y="685.200" width="1" height="5" fill="#434346"/><rect x="524.3" y="685.200" width="1" height="5" fill="#434346"/><rect x="535.2" y="680.200" width="1" height="10" fill="#434346"/><rect x="546.2" y="685.200" width="1" height="5" fill="#434346"/><rect x="557.1" y="685.200" width="1" height="5" fill="#434346"/><rect x="568.1" y="685.200" width="1" height="5" fill="#434346"/><rect x="578.9" y="646" width="1.200" height="44.500" fill="#5c5c60"/><rect x="589.9" y="685.200" width="1" height="5" fill="#55c267"/><rect x="600.9" y="685.200" width="1" height="5" fill="#55c267"/><rect x="611.8" y="685.200" width="1" height="5" fill="#55c267"/><rect x="622.8" y="680.200" width="1" height="10" fill="#55c267"/><rect x="633.7" y="685.200" width="1" height="5" fill="#55c267"/><rect x="644.6" y="685.200" width="1" height="5" fill="#55c267"/><rect x="655.6" y="685.200" width="1" height="5" fill="#55c267"/><rect x="666.5" y="680.200" width="1" height="10" fill="#55c267"/><rect x="677.4" y="685.200" width="1" height="5" fill="#55c267"/><rect x="688.4" y="685.200" width="1" height="5" fill="#55c267"/><rect x="699.3" y="685.200" width="1" height="5" fill="#55c267"/><rect x="710.2" y="680.200" width="1" height="10" fill="#55c267"/><rect x="721.2" y="685.200" width="1" height="5" fill="#55c267"/><rect x="732.1" y="685.200" width="1" height="5" fill="#55c267"/><rect x="743.1" y="685.200" width="1" height="5" fill="#55c267"/><rect x="753.9" y="646" width="1.200" height="44.500" fill="#5c5c60"/><rect x="764.9" y="685.200" width="1" height="5" fill="#434346"/><rect x="775.9" y="685.200" width="1" height="5" fill="#434346"/><rect x="786.8" y="685.200" width="1" height="5" fill="#434346"/><rect x="797.8" y="680.200" width="1" height="10" fill="#434346"/><rect x="808.7" y="685.200" width="1" height="5" fill="#434346"/><rect x="819.6" y="685.200" width="1" height="5" fill="#434346"/><rect x="830.6" y="685.200" width="1" height="5" fill="#434346"/><rect x="841.5" y="680.200" width="1" height="10" fill="#434346"/><rect x="852.4" y="685.200" width="1" height="5" fill="#434346"/><rect x="863.4" y="685.200" width="1" height="5" fill="#434346"/><rect x="874.3" y="685.200" width="1" height="5" fill="#434346"/><rect x="885.2" y="680.200" width="1" height="10" fill="#434346"/><rect x="896.2" y="685.200" width="1" height="5" fill="#434346"/><rect x="907.1" y="685.200" width="1" height="5" fill="#434346"/><rect x="918.1" y="685.200" width="1" height="5" fill="#434346"/><rect x="928.9" y="646" width="1.200" height="44.500" fill="#5c5c60"/><rect x="939.9" y="685.200" width="1" height="5" fill="#55c267"/><rect x="950.9" y="685.200" width="1" height="5" fill="#55c267"/><rect x="961.8" y="685.200" width="1" height="5" fill="#55c267"/><rect x="972.8" y="680.200" width="1" height="10" fill="#55c267"/><rect x="983.7" y="685.200" width="1" height="5" fill="#55c267"/><rect x="994.6" y="685.200" width="1" height="5" fill="#55c267"/><rect x="1005.6" y="685.200" width="1" height="5" fill="#55c267"/><rect x="1016.5" y="680.200" width="1" height="10" fill="#55c267"/><rect x="1027.4" y="685.200" width="1" height="5" fill="#55c267"/><rect x="1038.4" y="685.200" width="1" height="5" fill="#55c267"/><rect x="1049.3" y="685.200" width="1" height="5" fill="#55c267"/><rect x="1060.2" y="680.200" width="1" height="10" fill="#55c267"/><rect x="1071.2" y="685.200" width="1" height="5" fill="#55c267"/><rect x="1082.1" y="685.200" width="1" height="5" fill="#55c267"/><rect x="1093.1" y="685.200" width="1" height="5" fill="#55c267"/><rect x="1103.9" y="646" width="1.200" height="44.500" fill="#5c5c60"/><rect x="1115.0" y="685.200" width="1" height="5" fill="#434346"/><rect x="1126.0" y="685.200" width="1" height="5" fill="#434346"/><rect x="1137.0" y="685.200" width="1" height="5" fill="#434346"/><rect x="1148.0" y="680.200" width="1" height="10" fill="#434346"/><rect x="1159.0" y="685.200" width="1" height="5" fill="#434346"/><rect x="1170.0" y="685.200" width="1" height="5" fill="#434346"/><rect x="1181.0" y="685.200" width="1" height="5" fill="#434346"/><rect x="1192.0" y="680.200" width="1" height="10" fill="#434346"/><rect x="1202.9" y="685.200" width="1" height="5" fill="#434346"/><rect x="1213.9" y="685.200" width="1" height="5" fill="#434346"/><rect x="1224.9" y="685.200" width="1" height="5" fill="#434346"/><rect x="1235.9" y="680.200" width="1" height="10" fill="#434346"/><rect x="1246.9" y="685.200" width="1" height="5" fill="#434346"/><rect x="1257.9" y="685.200" width="1" height="5" fill="#434346"/><rect x="1268.9" y="685.200" width="1" height="5" fill="#434346"/><rect x="1279.8" y="646" width="1.200" height="44.500" fill="#5c5c60"/><rect x="1290.8" y="685.200" width="1" height="5" fill="#434346"/><rect x="1301.8" y="685.200" width="1" height="5" fill="#434346"/></svg>
<div class="t" style="left:124.6px;top:604.61px;font-size:10.5px;color:#8e8e93;font-weight:400;">オートメーション</div>
<div class="t" style="left:125px;top:619.62px;font-size:12.5px;color:#30c552;font-weight:400;">Read</div>
<div class="t" style="left:222.3px;top:604.7px;font-size:10.4px;color:#8e8e93;font-weight:400;">パラメータ</div>
<div class="t" style="left:222.4px;top:620.07px;font-size:12.2px;color:#fff;font-weight:350;">ボリューム</div>
<div class="t" style="left:678px;top:613.58px;font-size:10.3px;color:#fff;font-weight:500;">鉛筆</div>
<div class="t" style="left:1152.4px;top:605.3px;font-size:10.4px;color:#8e8e93;font-weight:400;">スナップ</div>
<div class="t" style="left:1152.8px;top:620.19px;font-size:12.3px;color:#fff;font-weight:400;letter-spacing:-0.5px">1/16</div>
<div class="t" style="left:59.1px;top:645.69px;font-size:12.3px;color:#8a8a8e;font-weight:400;">1</div>
<div class="t" style="left:234.1px;top:645.69px;font-size:12.3px;color:#8a8a8e;font-weight:400;">2</div>
<div class="t" style="left:409.1px;top:645.69px;font-size:12.3px;color:#8a8a8e;font-weight:400;">3</div>
<div class="t" style="left:584.1px;top:645.69px;font-size:12.3px;color:#8a8a8e;font-weight:400;">4</div>
<div class="t" style="left:759.1px;top:645.69px;font-size:12.3px;color:#8a8a8e;font-weight:400;">5</div>
<div class="t" style="left:934.1px;top:645.69px;font-size:12.3px;color:#8a8a8e;font-weight:400;">6</div>
<div class="t" style="left:1109.1px;top:645.69px;font-size:12.3px;color:#8a8a8e;font-weight:400;">7</div>
<div class="t" style="left:1285.0px;top:645.69px;font-size:12.3px;color:#8a8a8e;font-weight:400;">8</div>
<div class="t" style="left:238.1px;top:674.1px;font-size:10.4px;color:#e8f5ea;font-weight:400;letter-spacing:0.1px">Inst 1</div>
<div class="t" style="left:588.1px;top:674.1px;font-size:10.4px;color:#e8f5ea;font-weight:400;letter-spacing:0.1px">Inst 1</div>
<div class="t" style="left:938.1px;top:674.1px;font-size:10.4px;color:#e8f5ea;font-weight:400;letter-spacing:0.1px">Inst 1</div>
<svg width="1303" height="1192" viewBox="0 0 1303 1192"><rect x="21.400" y="1024" width="13.600" height="10.600" rx="2.200" fill="none" stroke="#fff" stroke-width="1.400"/><rect x="25" y="1027.600" width="15.400" height="11.800" rx="2.400" fill="#fff" stroke="#222224" stroke-width="1"/><g fill="#222224"><ellipse cx="30.400" cy="1036" rx="1.400" ry="1.100"/><ellipse cx="34.800" cy="1035.200" rx="1.400" ry="1.100"/><path d="M30.900 1030.800l4.800-1v5.400h-.900v-3.400l-3 .7v3.500h-.900z"/></g><rect x="67.500" y="1025" width="14" height="5.800" rx="2.900" fill="none" stroke="#fff" stroke-width="1.300"/><circle cx="70.600" cy="1027.900" r="1.700" fill="#fff"/><rect x="66.800" y="1032.600" width="15.300" height="6.600" rx="3.300" fill="#fff"/><circle cx="78.700" cy="1035.900" r="1.900" fill="#222224"/><rect x="112.300" y="1023.700" width="12.200" height="15.800" rx="1.800" fill="none" stroke="#fff" stroke-width="1.300"/><path d="M118.400 1026.600v10" stroke="#fff" stroke-width="1.100"/><rect x="117.100" y="1029" width="2.600" height="4.600" rx="1" fill="#222224" stroke="#fff" stroke-width="1"/><rect x="587.200" y="1015.800" width="41.900" height="30.700" rx="5" fill="#aeaeb3"/><g transform="translate(601.9000000000001 1037.6999999999998) rotate(-44.500)" fill="#111"><path d="M0 0L3-1.050L13.600-1.100L13.600 1.100L3 1.050Z" stroke="#111" stroke-width="0.300" stroke-linejoin="round"/><rect x="14.700" y="-1.250" width="2.300" height="2.500" rx="1.100"/></g><circle cx="651.600" cy="1033" r="5.200" fill="none" stroke="#fff" stroke-width="1.400"/><path d="M651.600 1028.200v4.800" stroke="#fff" stroke-width="1.400" stroke-linecap="round"/><circle cx="651.60" cy="1024.20" r="0.800" fill="#fff"/><circle cx="657.82" cy="1026.78" r="0.800" fill="#fff"/><circle cx="660.40" cy="1033.00" r="0.800" fill="#fff"/><circle cx="657.82" cy="1039.22" r="0.800" fill="#fff"/><circle cx="645.38" cy="1039.22" r="0.800" fill="#fff"/><circle cx="642.80" cy="1033.00" r="0.800" fill="#fff"/><circle cx="645.38" cy="1026.78" r="0.800" fill="#fff"/><path d="M689.6 1024.800v13.400" stroke="#fff" stroke-width="1.200" stroke-linecap="round"/><rect x="688.1" y="1030.8000000000002" width="3" height="5.200" rx="1.300" fill="#222224" stroke="#fff" stroke-width="1.100"/><path d="M695.7 1024.800v13.400" stroke="#fff" stroke-width="1.200" stroke-linecap="round"/><rect x="694.2" y="1026.2" width="3" height="5.200" rx="1.300" fill="#222224" stroke="#fff" stroke-width="1.100"/><path d="M701.8 1024.800v13.400" stroke="#fff" stroke-width="1.200" stroke-linecap="round"/><rect x="700.3" y="1030.8000000000002" width="3" height="5.200" rx="1.300" fill="#222224" stroke="#fff" stroke-width="1.100"/><rect x="1263.800" y="1024" width="18.600" height="15.200" rx="2.400" fill="#fff"/><rect x="1267.6" y="1024" width="2.300" height="8.600" fill="#222224"/><rect x="1268.3999999999999" y="1032.600" width="0.700" height="6.600" fill="#222224"/><rect x="1272.3" y="1024" width="2.300" height="8.600" fill="#222224"/><rect x="1273.1" y="1032.600" width="0.700" height="6.600" fill="#222224"/><rect x="1277" y="1024" width="2.300" height="8.600" fill="#222224"/><rect x="1277.8" y="1032.600" width="0.700" height="6.600" fill="#222224"/><rect x="1097.400" y="85" width="2.400" height="242.500" fill="#8c8c8c"/><rect x="292.500" y="784" width="2.400" height="320" fill="#8c8c8c"/></svg>
</body></html>
